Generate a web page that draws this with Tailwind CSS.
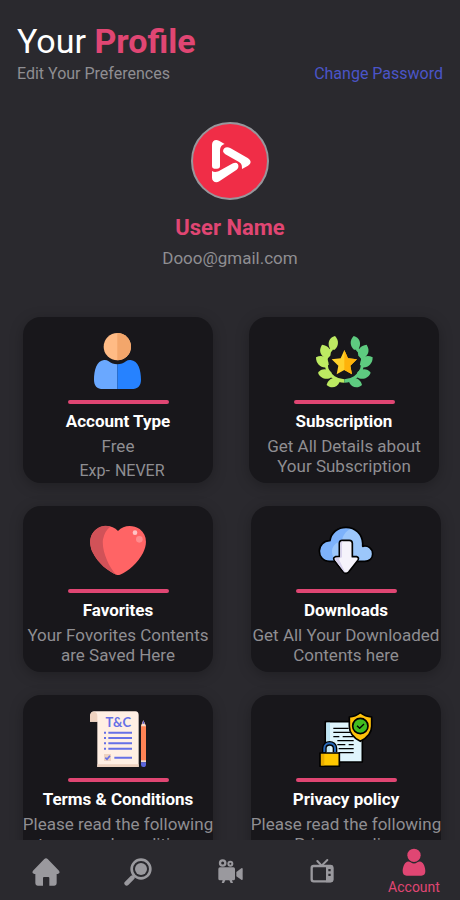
<!DOCTYPE html>
<html lang="en">

<head>
    <meta charset="UTF-8">
    <meta name="viewport" content="width=device-width, initial-scale=1.0">
    <title>Your Profile</title>
    <script src="https://cdn.jsdelivr.net/npm/@tailwindcss/browser@4"></script>
</head>

<body class="flex flex-col h-screen overflow-hidden bg-[#2a292e] font-['Roboto',sans-serif] text-[#8f8e92]">
    <main class="flex-1 min-h-0 overflow-hidden">
        <!-- Header -->
        <header class="px-[17px] pt-5">
            <h1 class="text-[34px] leading-[42px] text-white">Your <span class="font-bold text-[#e04673]">Profile</span></h1>
            <div class="flex justify-between text-base leading-6">
                <p>Edit Your Preferences</p>
                <a href="#" class="text-[#4a55c8]">Change Password</a>
            </div>
        </header>

        <!-- User -->
        <section class="flex flex-col items-center pt-9">
            <div class="size-[78px] rounded-full border-2 border-[#97979c] bg-[#f02d47]">
                <svg class="size-full" viewBox="0 0 222 222" fill="#fff">
                    <path d="M57 62C57 49 68 45 78 50L95 60C83 64 81 72 81 84V126Q81 134 72 134H64Q57 134 57 127Z" />
                    <path d="M94 73C99 68 106 69 113 73L164 102C176 109 175 119 165 125L147 135C147 124 146 119 138 114L97 91Q85 83 94 73Z" />
                    <path d="M57 141C64 146 74 144 82 139L120 118Q130 114 135 121Q139 131 131 137L79 172C69 178 57 173 57 161Z" />
                </svg>
            </div>
            <h2 class="mt-3 text-[22px] leading-8 font-bold text-[#e04673]">User Name</h2>
            <p class="mt-0.5 text-[17px] leading-6">Dooo@gmail.com</p>
        </section>

        <!-- Cards -->
        <section class="flex flex-col gap-[23px] mt-[47px] text-center text-[17px] leading-5">
            <div class="flex gap-9 pl-[23px] pr-[21px]">
                <article class="flex flex-col items-center flex-1 min-w-0 h-[166px] pt-4 rounded-[18px] bg-[#18171b] shadow-[0_3px_14px_rgba(0,0,0,0.25)]">
                    <svg class="size-14 shrink-0" viewBox="0 0 168 168">
                        <circle cx="82" cy="41" r="41" fill="#ffbb85" />
                        <path d="M82 0a41 41 0 0 1 0 82z" fill="#f3a66b" />
                        <path d="M82 94C72 94 63 91 56 85Q50 80 42 81C20 83 12 112 12 140C12 158 20 168 40 168H82Z" fill="#6aa8ff" />
                        <path d="M82 94C92 94 101 91 108 85Q114 80 122 81C145 83 153 112 153 140C153 158 144 168 124 168H82Z" fill="#2682ff" />
                    </svg>
                    <div class="w-[101px] h-1 mt-[11px] shrink-0 rounded-full bg-[#e04673]"></div>
                    <h3 class="mt-[7px] font-bold text-white">Account Type</h3>
                    <p class="mt-[5px]">Free</p>
                    <p class="flex gap-[5px] mt-[5px] pl-2 text-base leading-5"><span>Exp-</span><span>NEVER</span></p>
                </article>
                <article class="flex flex-col items-center flex-1 min-w-0 h-[166px] pt-4 rounded-[18px] bg-[#18171b] shadow-[0_3px_14px_rgba(0,0,0,0.25)]">
                    <svg class="size-14 shrink-0 overflow-visible" viewBox="0 0 168 168">
                        <g fill="#bdea62">
                            <path d="M57 9C40 13 31 32 44 50H56C68 40 70 22 57 9Z" />
                            <path d="M18 35C7 52 12 70 34 77L43 68C48 50 37 38 18 35Z" />
                            <path d="M0 73C0 93 14 106 33 103L38 94C37 74 20 63 0 73Z" />
                            <path d="M6 119C14 138 34 143 48 131L47 119C36 106 16 105 6 119Z" />
                            <path d="M32 156C45 168 64 164 71 147L67 138C52 130 36 139 32 156Z" />
                            <path d="M44 44A61 61 0 0 0 85 149V139A51 51 0 0 1 51 50Z" />
                        </g>
                        <g transform="translate(170 0) scale(-1 1)" fill="#5ecb80">
                            <path d="M57 9C40 13 31 32 44 50H56C68 40 70 22 57 9Z" />
                            <path d="M18 35C7 52 12 70 34 77L43 68C48 50 37 38 18 35Z" />
                            <path d="M0 73C0 93 14 106 33 103L38 94C37 74 20 63 0 73Z" />
                            <path d="M6 119C14 138 34 143 48 131L47 119C36 106 16 105 6 119Z" />
                            <path d="M32 156C45 168 64 164 71 147L67 138C52 130 36 139 32 156Z" />
                            <path d="M44 44A61 61 0 0 0 85 149V139A51 51 0 0 1 51 50Z" />
                        </g>
                        <path d="M85 51L96 76L123 79L103 98L108 124L85 111L62 124L67 98L47 79L74 76Z" fill="#ffd12b" />
                        <path d="M85 51L96 76L123 79L103 98L108 124L85 111Z" fill="#ffb20a" />
                    </svg>
                    <div class="w-[101px] h-1 mt-[11px] shrink-0 rounded-full bg-[#e04673]"></div>
                    <h3 class="mt-[7px] font-bold text-white">Subscription</h3>
                    <p class="mt-[5px]">Get All Details about<br>Your Subscription</p>
                </article>
            </div>

            <div class="flex gap-[38px] pl-[23px] pr-[19px]">
                <article class="flex flex-col items-center flex-1 min-w-0 h-[166px] pt-4 rounded-[18px] bg-[#18171b] shadow-[0_3px_14px_rgba(0,0,0,0.25)]">
                    <svg class="size-14 shrink-0" viewBox="0 0 168 168">
                        <path d="M84 27C68 8 38 8 20 21C-2 37-4 66 8 91C24 124 55 149 79 158Q84 160 90 158C115 149 144 122 159 93C173 65 171 38 149 21C129 8 101 8 84 27Z" fill="#ff6465" />
                        <path d="M61 14C46 9 32 12 20 21C-2 37-4 66 8 91C24 124 55 149 79 158C57 138 34 84 39 52Q44 26 61 14Z" fill="#d15258" />
                        <circle cx="135" cy="32" r="7" fill="#ffc4c5" />
                        <circle cx="148" cy="52" r="10" fill="#ff8b8d" />
                    </svg>
                    <div class="w-[101px] h-1 mt-[11px] shrink-0 rounded-full bg-[#e04673]"></div>
                    <h3 class="mt-[7px] font-bold text-white">Favorites</h3>
                    <p class="mt-[5px]">Your Fovorites Contents<br>are Saved Here</p>
                </article>
                <article class="flex flex-col items-center flex-1 min-w-0 h-[166px] pt-4 rounded-[18px] bg-[#18171b] shadow-[0_3px_14px_rgba(0,0,0,0.25)]">
                    <svg class="size-14 shrink-0" viewBox="0 0 168 168" stroke-linejoin="round">
                        <path d="M34 118C14 118 4 102 4 87C4 70 18 55 36 56C39 32 59 16 84 16C112 16 133 36 134 64V73C150 69 164 80 164 96C164 109 154 118 140 118Z" fill="#9cc7fb" />
                        <path d="M34 118C14 118 4 102 4 87C4 70 18 55 36 56C39 32 59 16 84 16Q93 16 101 19C82 27 73 44 72 58C53 60 41 74 42 91Q43 107 57 118Z" fill="#7db2fb" />
                        <path d="M34 118C14 118 4 102 4 87C4 70 18 55 36 56C39 32 59 16 84 16C112 16 133 36 134 64V73C150 69 164 80 164 96C164 109 154 118 140 118Z" fill="none" stroke="#000" stroke-width="5" />
                        <path d="M64 104V64Q64 55 73 55H94Q103 55 103 64V104H116Q126 107 118 117L92 150Q84 158 76 150L50 117Q43 107 52 104Z" fill="#f5f3fb" stroke="#000" stroke-width="5" />
                        <path d="M67 106V65Q67 58 75 58Q71 62 72 70V106L62 110L82 152Q79 152 76 147L53 116Q49 108 55 107Z" fill="#d9d3ee" />
                    </svg>
                    <div class="w-[101px] h-1 mt-[11px] shrink-0 rounded-full bg-[#e04673]"></div>
                    <h3 class="mt-[7px] font-bold text-white">Downloads</h3>
                    <p class="mt-[5px]">Get All Your Downloaded<br>Contents here</p>
                </article>
            </div>

            <div class="flex gap-[38px] pl-[23px] pr-[19px]">
                <article class="flex flex-col items-center flex-1 min-w-0 h-[166px] pt-4 rounded-[18px] bg-[#18171b] shadow-[0_3px_14px_rgba(0,0,0,0.25)]">
                    <svg class="size-14 shrink-0" viewBox="0 0 168 168">
                        <path d="M0 32V15Q1 1 13 1H136Q146 2 146 12V168H22V32Z" fill="#ffefe4" />
                        <path d="M0 32V15Q1 2 12 2Q22 3 22 15V32ZM22 160H146V168H22Z" fill="#eed2c0" />
                        <text x="85" y="47" text-anchor="middle" fill="#6670e6" font-family="Lato, sans-serif" font-weight="700" font-size="39">T&amp;C</text>
                        <path d="M55 65H126M55 81H126M55 97H126M55 113H126M73 140H126" stroke="#6670e6" stroke-width="6" />
                        <path d="M42 65H48M42 81H48M42 97H48M42 113H48" stroke="#6670e6" stroke-width="6" />
                        <path d="M42 129H63V150H42Z" fill="#eed2c0" />
                        <path d="M46 140L51 145L60 134" fill="none" stroke="#6670e6" stroke-width="5" />
                        <path d="M153 44L160 28L168 44V153H153Z" fill="#ff8354" />
                        <path d="M153 46L160 28L168 46Z" fill="#f5dccb" />
                        <path d="M157 38L160 28L164 38Z" fill="#4f57c9" />
                        <path d="M153 148H168V154H153Z" fill="#f5dccb" />
                        <path d="M153 154H168V161Q168 168 160 168Q153 168 153 161Z" fill="#5b65dc" />
                    </svg>
                    <div class="w-[101px] h-1 mt-[11px] shrink-0 rounded-full bg-[#e04673]"></div>
                    <h3 class="mt-[7px] font-bold text-white">Terms &amp; Conditions</h3>
                    <p class="mt-[5px] whitespace-nowrap">Please read the following<br>terms and conditions</p>
                </article>
                <article class="flex flex-col items-center flex-1 min-w-0 h-[166px] pt-4 rounded-[18px] bg-[#18171b] shadow-[0_3px_14px_rgba(0,0,0,0.25)]">
                    <svg class="size-14 shrink-0" viewBox="0 0 168 168" stroke="#000" stroke-linejoin="round">
                        <path d="M22 32H133V153H22Z" fill="#dff5fc" stroke-width="5" />
                        <path d="M25 35H36V150H25Z" fill="#bee5f4" stroke="none" />
                        <path d="M46 52H92M46 64H96M46 77H64M74 77H107M58 89H107M58 101H82M92 101H107M62 113H107M62 125H107" stroke-width="4" />
                        <path d="M19 124V112C19 92 51 92 51 112V124" fill="none" stroke="#000" stroke-width="14" />
                        <path d="M19 124V112C19 92 51 92 51 112V124" fill="none" stroke="#2869b8" stroke-width="6" />
                        <path d="M6 126H64V166H6Z" fill="#ffc800" stroke-width="5" />
                        <path d="M9 129H19V163H9Z" fill="#e9ad00" stroke="none" />
                        <path d="M127 5C117 13 107 17 94 18V46C94 68 107 81 127 91C147 81 161 68 161 46V18C147 17 137 13 127 5Z" fill="#ffc20a" stroke-width="5" />
                        <circle cx="127" cy="45" r="23" fill="#41bd20" stroke-width="5" />
                        <path d="M117 44L125 52L138 39" fill="none" stroke-width="4" />
                    </svg>
                    <div class="w-[101px] h-1 mt-[11px] shrink-0 rounded-full bg-[#e04673]"></div>
                    <h3 class="mt-[7px] font-bold text-white">Privacy policy</h3>
                    <p class="mt-[5px] whitespace-nowrap">Please read the following<br>Privacy policy</p>
                </article>
            </div>
        </section>
    </main>

    <!-- Bottom navigation -->
    <nav class="relative grid grid-cols-5 h-[60px] shrink-0 bg-[#2a292e] text-[#9a999e]">
        <a href="#" aria-label="Home" class="flex items-center justify-center pt-1">
            <svg class="size-7" viewBox="0 0 84 84" fill="currentColor">
                <path d="M37 3Q42-1 47 3L81 38Q86 46 77 48H74V76Q74 83 67 83H52V60Q52 57 49 57H36Q33 57 33 60V83H17Q10 83 10 76V48H7Q-2 46 3 38Z" />
            </svg>
        </a>
        <a href="#" aria-label="Search" class="flex items-center justify-center pt-1">
            <svg class="size-7" viewBox="0 0 84 84" fill="currentColor">
                <circle cx="51" cy="33" r="28" fill="none" stroke="currentColor" stroke-width="8" />
                <circle cx="51" cy="33" r="18" />
                <path d="M8 76L25 59" fill="none" stroke="currentColor" stroke-width="14" stroke-linecap="round" />
            </svg>
        </a>
        <a href="#" aria-label="Movies" class="flex items-center justify-center pt-1">
            <svg class="size-7" viewBox="0 0 84 84" fill="currentColor">
                <circle cx="20" cy="15" r="8" fill="none" stroke="currentColor" stroke-width="7" />
                <circle cx="43" cy="17" r="6" fill="none" stroke="currentColor" stroke-width="6" />
                <path d="M12 28H52Q57 28 57 33V62Q57 67 52 67H48L51 75H44L40 67H28L24 75H17L20 67H12Q7 67 7 62V33Q7 28 12 28Z" />
                <path d="M61 42L76 31Q80 29 80 33V63Q80 67 76 65L61 55Z" />
            </svg>
        </a>
        <a href="#" aria-label="TV shows" class="flex items-center justify-center pt-1">
            <svg class="size-7" viewBox="0 0 84 84" fill="none" stroke="currentColor">
                <path d="M28 9L41 23L58 6" stroke-width="6" stroke-linecap="round" />
                <rect x="11" y="24" width="62" height="46" rx="6" stroke-width="7" />
                <path d="M54 21H67Q76 21 76 31V64Q76 73 67 73H54Z" fill="currentColor" stroke="none" />
                <path d="M61 33H68V40H61ZM61 47H68V54H61Z" fill="#2a292e" stroke="none" />
            </svg>
        </a>
        <a href="#" aria-current="page" class="flex flex-col items-center pt-2 text-sm leading-[22px] text-[#e04673]">
            <svg class="size-7 shrink-0" viewBox="0 0 84 84" fill="currentColor">
                <circle cx="42" cy="22" r="20" />
                <path d="M21 41Q27 39 32 43Q42 50 52 43Q57 39 63 41C72 45 76 60 76 69Q76 83 64 83H20Q8 83 8 69C8 60 12 45 21 41Z" />
            </svg>
            <span>Account</span>
        </a>
    </nav>
</body>

</html>
